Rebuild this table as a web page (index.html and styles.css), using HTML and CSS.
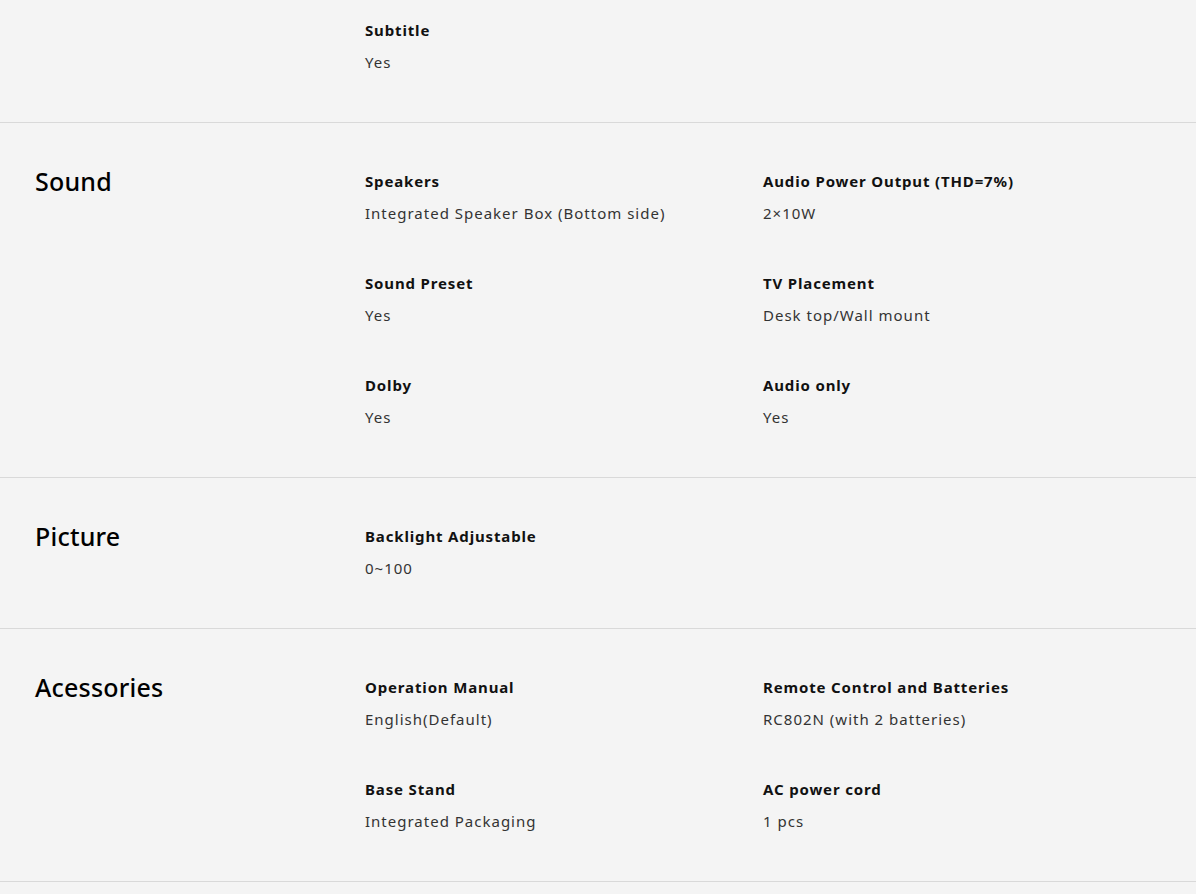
FILE: index.html
```html
<!DOCTYPE html>
<html lang="en">
<head>
<meta charset="utf-8">
<title>Specifications</title>
<link rel="stylesheet" href="styles.css">
</head>
<body>
<main class="specs">
  <section class="spec-group spec-group--first">
    <h2 class="group-title"></h2>
    <div class="items">
      <div class="item"><div class="label">Subtitle</div><div class="value">Yes</div></div>
    </div>
  </section>
  <section class="spec-group">
    <h2 class="group-title">Sound</h2>
    <div class="items">
      <div class="item"><div class="label">Speakers</div><div class="value">Integrated Speaker Box (Bottom side)</div></div>
      <div class="item"><div class="label">Audio Power Output (THD=7%)</div><div class="value">2×10W</div></div>
      <div class="item"><div class="label">Sound Preset</div><div class="value">Yes</div></div>
      <div class="item"><div class="label">TV Placement</div><div class="value">Desk top/Wall mount</div></div>
      <div class="item"><div class="label">Dolby</div><div class="value">Yes</div></div>
      <div class="item"><div class="label">Audio only</div><div class="value">Yes</div></div>
    </div>
  </section>
  <section class="spec-group">
    <h2 class="group-title">Picture</h2>
    <div class="items">
      <div class="item"><div class="label">Backlight Adjustable</div><div class="value">0~100</div></div>
    </div>
  </section>
  <section class="spec-group">
    <h2 class="group-title">Acessories</h2>
    <div class="items">
      <div class="item"><div class="label">Operation Manual</div><div class="value">English(Default)</div></div>
      <div class="item"><div class="label">Remote Control and Batteries</div><div class="value">RC802N (with 2 batteries)</div></div>
      <div class="item"><div class="label">Base Stand</div><div class="value">Integrated Packaging</div></div>
      <div class="item"><div class="label">AC power cord</div><div class="value">1 pcs</div></div>
    </div>
  </section>
</main>
</body>
</html>
```
FILE: styles.css
```css
html, body {
  margin: 0;
  padding: 0;
  background: #f4f4f4;
}
body {
  font-family: "Noto Sans", "DejaVu Sans", sans-serif;
  color: #333;
}
.specs {
  display: flex;
  flex-direction: column;
}
.spec-group {
  display: grid;
  grid-template-columns: 330px 1fr;
  padding: 46px 35px 48px 35px;
  border-bottom: 1px solid #d9d9d9;
}
.spec-group--first {
  padding-top: 18px;
}
.group-title {
  margin: 0;
  font-size: 25px;
  line-height: 24px;
  font-weight: 500;
  letter-spacing: 0.2px;
  color: #000;
}
.items {
  display: grid;
  grid-template-columns: 1fr 1fr;
  row-gap: 46px;
}
.item {
  display: flex;
  flex-direction: column;
  gap: 8px;
}
.label {
  font-size: 15px;
  line-height: 24px;
  font-weight: 700;
  letter-spacing: 0.85px;
  color: #111;
}
.value {
  font-size: 15px;
  line-height: 24px;
  font-weight: 400;
  letter-spacing: 1px;
  color: #333;
}
```
